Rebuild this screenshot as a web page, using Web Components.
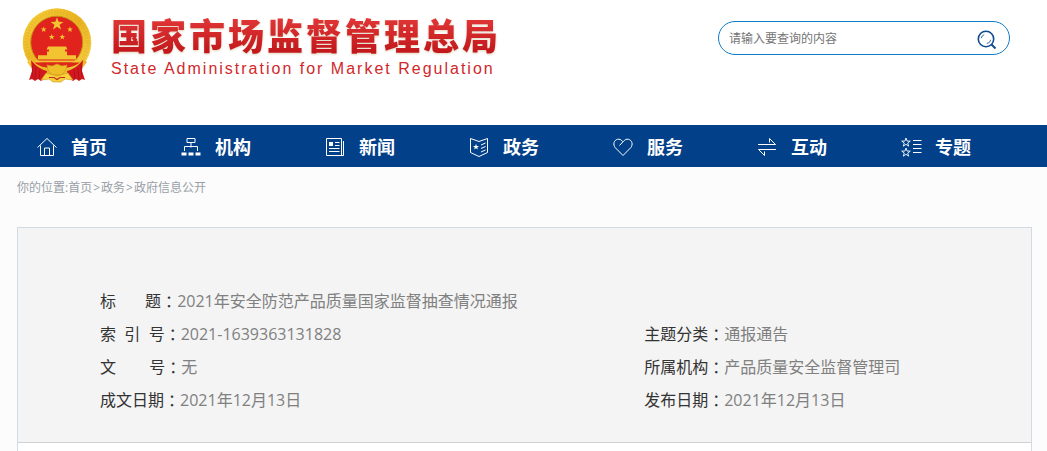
<!DOCTYPE html>
<html lang="zh-CN">
<head>
<meta charset="utf-8">
<meta name="viewport" content="width=device-width, initial-scale=1">
<title>国家市场监督管理总局</title>
<style>
  body {
    margin: 0;
    background: #fcfcfc;
    color: #333;
    font-family: "Open Sans", "Noto Sans CJK SC", sans-serif;
  }
</style>
</head>
<body>
<gov-page>
  <site-header slot="header">
    <site-brand>国家市场监督管理总局<span slot="en">State Administration for Market Regulation</span></site-brand>
    <site-search slot="tools"></site-search>
  </site-header>
  <site-nav slot="nav">
    <nav-item icon="home">首页</nav-item>
    <nav-item icon="org">机构</nav-item>
    <nav-item icon="news">新闻</nav-item>
    <nav-item icon="policy">政务</nav-item>
    <nav-item icon="heart">服务</nav-item>
    <nav-item icon="swap">互动</nav-item>
    <nav-item icon="topics">专题</nav-item>
  </site-nav>
  <bread-crumb></bread-crumb>
  <info-panel>
    <info-field wide label="标&nbsp;&nbsp;&nbsp;&nbsp;&nbsp;&nbsp;&nbsp;题">2021年安全防范产品质量国家监督抽查情况通报</info-field>
    <info-field label="索&nbsp;&nbsp;引&nbsp;&nbsp;号">2021-1639363131828</info-field>
    <info-field label="主题分类">通报通告</info-field>
    <info-field label="文&nbsp;&nbsp;&nbsp;&nbsp;&nbsp;&nbsp;&nbsp;&nbsp;号">无</info-field>
    <info-field label="所属机构">产品质量安全监督管理司</info-field>
    <info-field label="成文日期">2021年12月13日</info-field>
    <info-field label="发布日期">2021年12月13日</info-field>
  </info-panel>
</gov-page>

<script>
const STAR = '0,-10 2.4,-3.2 9.5,-3.1 3.8,1.2 5.9,8.1 0,4 -5.9,8.1 -3.8,1.2 -9.5,-3.1 -2.4,-3.2';
const star = (x, y, s) => `<polygon points="${STAR}" transform="translate(${x} ${y}) scale(${s})"/>`;

const ICONS = {
  home: '<path d="M.5 10.500 10 1.500l9.500 9M3.500 8.500v10h13v-10M7.500 18v-7h5v7"/>',
  org: '<path d="M6 1.500h8v4H6zM10 5.500v5M3.500 14v-4.500h13V14"/><path class="f" d="M.5 15.500h5v3h-5zM7.500 15.500h5v3h-5zM14.500 15.500h5v3h-5z"/>',
  news: '<path d="M1.500 1.500h15v17h-15zM18.500 4v14.500h-3M10 5.500h4.500M10 8.500h4.500M4 11.500h10.500M4 14.500h10.500"/><path class="f" d="M4 5h4v4H4z"/>',
  policy: '<path d="M1.500 1.500 10 4.500l8.500-3v14l-8.500 4-8.500-4zM12 8l4.500-2M12 11.500l4.500-2M12 15l4.500-2"/><g class="f">' + star(7, 10, .32) + '</g>',
  heart: '<path d="M10 18.500 2.200 10.600C-.2 7.600.8 3.200 4.500 2.300c2-.4 3.500.2 5.500 2.500 2-2.300 3.500-2.900 5.500-2.500 3.700.9 4.700 5.300 2.300 8.300zM10 4.800 6.500 8.500"/>',
  swap: '<path d="M1 7.500h17.500L12.500 1.500v4M19 12.500H1.500l6 6v-4"/>',
  topics: '<g class="s">' + star(5, 5.500, .45) + star(5, 15.500, .45) + '</g><path d="M12 3.500h8.500M12 7.500h8.500M12 11.500h8.500M12 15.500h8.500"/>'
};

function define(name, html, setup) {
  const template = document.createElement('template');
  template.innerHTML = html;
  customElements.define(name, class extends HTMLElement {
    constructor() {
      super();
      this.attachShadow({ mode: 'open' }).append(template.content.cloneNode(true));
    }
    connectedCallback() {
      if (setup) setup(this, this.shadowRoot);
    }
  });
}

define('gov-page', `
  <style>
    :host { display: flex; flex-direction: column; min-height: 100vh; }
    main { display: flex; flex: 1; flex-direction: column; padding: 0 15px 0 17px; }
  </style>
  <slot name="header"></slot>
  <slot name="nav"></slot>
  <main><slot></slot></main>`);

define('site-header', `
  <style>
    :host { display: block; background: #fff; }
    header { display: flex; justify-content: space-between; align-items: flex-start; min-height: 104px; padding: 8px 37px 13px 22px; }
    .tools { margin-top: 13px; }
  </style>
  <header><slot></slot><div class="tools"><slot name="tools"></slot></div></header>`);

define('site-brand', `
  <style>
    :host { display: block; }
    a { display: flex; gap: 19px; text-decoration: none; }
    svg { flex: none; }
    .zh {
      display: block;
      font: 900 36px/52px "Noto Sans CJK SC", sans-serif;
      letter-spacing: 3px;
      white-space: nowrap;
      color: transparent;
      background: linear-gradient(#e03636 20%, #c2181c 85%);
      -webkit-background-clip: text;
      background-clip: text;
      filter: drop-shadow(0 1px 1px #e0d2bc);
    }
    .en {
      display: block;
      font: 16px/18px "Liberation Sans", sans-serif;
      letter-spacing: 2px;
      white-space: nowrap;
      color: #d0282b;
    }
  </style>
  <a href="#" aria-label="国家市场监督管理总局">
    <svg width="70" height="75" viewBox="0 0 70 75" aria-hidden="true">
      <defs>
        <linearGradient id="gold" x2="1" y2="1"><stop offset="0" stop-color="#f6d23c"/><stop offset=".5" stop-color="#e9b321"/><stop offset="1" stop-color="#f7d748"/></linearGradient>
      </defs>
      <circle cx="35" cy="34.600" r="34.300" fill="url(#gold)"/>
      <circle cx="35" cy="34.600" r="30.500" fill="none" stroke="#d99c1c" stroke-width="4" stroke-dasharray="1 2" opacity=".35"/>
      <circle cx="34.700" cy="34.200" r="26" fill="#e0231d" stroke="#c98e16"/>
      <g fill="#f2c431">
        ${star(35, 16, .68)}${star(21.700, 21.500, .31)}${star(48, 21.500, .31)}${star(29.700, 29, .31)}${star(40.300, 29, .31)}
        <path d="M26 38.500h18l1.500 3H24.500zM27 41.500h16v2H27zM25 43.500h20v4H25zM16 47.300h38v4.200H16zM13 52.500h44v2H13z"/>
      </g>
      <path d="M12 54.500h46c-6 4-10 5.700-23 5.700S17 58 12 54.500z" fill="#de251b"/>
      <path d="M9 51c7 8 14 12 26 12s19-4 26-12l4 3c-5 8-12 13-19 15H24C17 67 10 62 5 54z" fill="url(#gold)"/>
      <path d="M9 52c4 5 9 9 16 11l-1 6-5 4-3-2-3 2-3-2-3 1 3-9zM61 52c-4 5-9 9-16 11l1 6 5 4 3-2 3 2 3-2 3 1-3-9z" fill="#d3171f"/>
      <path d="M11 57l-1 12M14 60l-1 11M18 62l-1 9M59 57l1 12M56 60l1 11M52 62l1 9" fill="none" stroke="#a8101a" stroke-width=".8"/>
      <path d="m35 56 5 2 5-1-1 5-4 5H30l-4-5-1-5 5 1z" fill="#efbd27" stroke="#cf941c" stroke-width=".7"/>
      <path d="m24 65 11 3 11-3 5 7-8-1-4 3h-8l-4-3-8 1z" fill="#f6d23c" stroke="#cf941c" stroke-width=".6"/>
      <path d="M27 69.500h5l3 2 3-2h5" fill="none" stroke="#c7271e" stroke-width="1.200"/>
    </svg>
    <span>
      <span class="zh"><slot></slot></span>
      <span class="en"><slot name="en"></slot></span>
    </span>
  </a>`);

define('site-search', `
  <style>
    :host { display: block; }
    form { display: flex; align-items: center; box-sizing: border-box; width: 292px; height: 34px; padding: 2px 10px 0; border: 1px solid #117cc9; border-radius: 17px; background: #fff; }
    input { flex: 1; min-width: 0; padding: 0; border: 0; outline: 0; background: none; color: #333; font: 12px/18px "Open Sans", "Noto Sans CJK SC", sans-serif; }
    input::placeholder { color: #757575; opacity: 1; }
    button { display: flex; padding: 2px 2px 0; border: 0; background: none; cursor: pointer; }
  </style>
  <form role="search">
    <input type="search" aria-label="请输入要查询的内容" placeholder="请输入要查询的内容">
    <button type="button" aria-label="搜索">
      <svg width="20" height="20" viewBox="0 0 20 20" fill="none" stroke="#124a92">
        <circle cx="9" cy="9" r="7.700" stroke-width="1.600"/>
        <path d="m14.500 14.500 4 4" stroke-width="2"/>
        <path d="M4.200 8.200a5 5 0 0 1 3-3.600M13.800 9.800a5 5 0 0 1-4 3.800" stroke-width=".8"/>
      </svg>
    </button>
  </form>`);

define('site-nav', `
  <style>
    :host { display: block; background: #024089; }
    nav { display: grid; grid-template-columns: repeat(7, 1fr); padding: 0 19px 0 20px; }
  </style>
  <nav aria-label="主导航"><slot></slot></nav>`);

define('nav-item', `
  <style>
    :host { display: block; }
    a { display: flex; align-items: center; gap: 13px; padding: 2px 0 0 17px; color: #fff; text-decoration: none; font: 700 18px/40px "Open Sans", "Noto Sans CJK SC", sans-serif; white-space: nowrap; }
    svg { flex: none; overflow: visible; fill: none; stroke: #fff; stroke-width: 1; }
    .f { fill: #fff; stroke: none; }
    .s { stroke-width: 2; }
  </style>
  <a href="#"><svg width="21" height="20" viewBox="0 0 21 20" aria-hidden="true"></svg><slot></slot></a>`,
  (host, root) => { root.querySelector('svg').innerHTML = ICONS[host.getAttribute('icon')]; });

define('bread-crumb', `
  <style>
    :host { display: block; }
    nav { display: flex; height: 60px; color: #999fa7; font: 12px/42px "Open Sans", "Noto Sans CJK SC", sans-serif; white-space: nowrap; }
    a { color: inherit; text-decoration: none; }
    i { margin: 0 1px; font-style: normal; }
  </style>
  <nav aria-label="你的位置"><span>你的位置:</span><a href="#">首页</a><i>&gt;</i><a href="#">政务</a><i>&gt;</i><a href="#">政府信息公开</a></nav>`);

define('info-panel', `
  <style>
    :host { display: block; flex: 1; border: 1px solid #d2dae3; border-bottom: 0; background: #fff; }
    section { display: grid; grid-template-columns: 3fr 2fr; padding: 57px 24px 25px 82px; border-bottom: 1px solid #d2d2d2; background: #f4f4f4; }
  </style>
  <section><slot></slot></section>`);

define('info-field', `
  <style>
    :host { display: block; }
    :host([wide]) { grid-column: 1 / -1; }
    dl { display: flex; margin: 0; font-size: 16px; line-height: 33px; }
    dt { flex: none; display: flex; color: #333; }
    .colon { font-family: "Noto Sans CJK TC", sans-serif; }
    dd { margin: 0; color: #808080; }
  </style>
  <dl><dt><span class="label"></span><span class="colon" lang="zh-TW">：</span></dt><dd><slot></slot></dd></dl>`,
  (host, root) => { root.querySelector('.label').textContent = host.getAttribute('label'); });
</script>
</body>
</html>
